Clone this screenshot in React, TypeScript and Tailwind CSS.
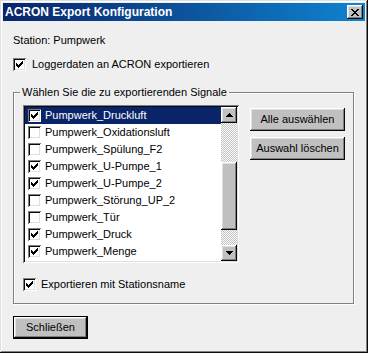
const signals = [
  { name: 'Pumpwerk_Druckluft', checked: true },
  { name: 'Pumpwerk_Oxidationsluft', checked: false },
  { name: 'Pumpwerk_Spülung_F2', checked: false },
  { name: 'Pumpwerk_U-Pumpe_1', checked: true },
  { name: 'Pumpwerk_U-Pumpe_2', checked: true },
  { name: 'Pumpwerk_Störung_UP_2', checked: false },
  { name: 'Pumpwerk_Tür', checked: false },
  { name: 'Pumpwerk_Druck', checked: true },
  { name: 'Pumpwerk_Menge', checked: true },
];

const raised =
  'bg-[#c0c0c0] shadow-[inset_-1px_-1px_#0a0a0a,inset_1px_1px_#ffffff,inset_-2px_-2px_#808080,inset_2px_2px_#dfdfdf]';
const dither =
  'bg-[repeating-conic-gradient(#c0c0c0_0_25%,#ffffff_0_50%)] bg-size-[2px_2px]';

function CheckMark() {
  const cols = [
    [0, 2],
    [1, 3],
    [2, 4],
    [3, 3],
    [4, 2],
    [5, 1],
    [6, 0],
  ];
  return (
    <svg width="7" height="7" viewBox="0 0 7 7" shapeRendering="crispEdges">
      {cols.map(([x, y]) => (
        <rect key={x} x={x} y={y} width="1" height="3" fill="#000" />
      ))}
    </svg>
  );
}

function Checkbox({ checked }: { checked: boolean }) {
  return (
    <span className="inline-flex h-[13px] w-[13px] shrink-0 items-center justify-center bg-white shadow-[inset_1px_1px_#808080,inset_-1px_-1px_#ffffff,inset_2px_2px_#0a0a0a,inset_-2px_-2px_#dfdfdf]">
      {checked && <CheckMark />}
    </span>
  );
}

function Arrow({ up }: { up?: boolean }) {
  const rows = [0, 1, 2, 3];
  return (
    <svg width="7" height="4" viewBox="0 0 7 4" shapeRendering="crispEdges">
      {rows.map((r) => {
        const y = up ? r : 3 - r;
        return <rect key={r} x={3 - r} y={y} width={1 + r * 2} height="1" fill="#000" />;
      })}
    </svg>
  );
}

function Button({ label, isDefault }: { label: string; isDefault?: boolean }) {
  return (
    <button
      className={`flex h-[23px] items-center justify-center text-[11px] text-black ${raised} ${
        isDefault ? 'w-[75px] border border-black' : 'w-[95px]'
      }`}
    >
      {label}
    </button>
  );
}

export default function App() {
  return (
    <div
      className="flex h-[353px] w-[368px] flex-col bg-[#efefef] p-[3px] text-[11px] leading-[13px] text-black shadow-[inset_-1px_-1px_#0a0a0a,inset_1px_1px_#dfdfdf,inset_-2px_-2px_#808080,inset_2px_2px_#ffffff]"
      style={{ fontFamily: '"Liberation Sans", Arial, sans-serif' }}
    >
      <div className="flex h-[18px] items-center justify-between bg-gradient-to-r from-[#0a246a] to-[#1084d0] pl-[2px] pr-[2px]">
        <span className="text-[12px] font-bold text-white">ACRON Export Konfiguration</span>
        <span className={`flex h-[14px] w-[16px] items-center justify-center ${raised}`}>
          <svg width="8" height="7" viewBox="0 0 8 7" shapeRendering="crispEdges">
            <path d="M0 0h2v1h-2zM6 0h2v1h-2zM1 1h2v1h-2zM5 1h2v1h-2zM2 2h4v1h-4zM3 3h2v1h-2zM2 4h4v1h-4zM1 5h2v1h-2zM5 5h2v1h-2zM0 6h2v1h-2zM6 6h2v1h-2z" fill="#000" />
          </svg>
        </span>
      </div>

      <div className="flex flex-col pl-[10px] pr-[11px]">
        <div className="mt-[13px]">Station: Pumpwerk</div>

        <label className="mt-[11px] flex items-center gap-[6px]">
          <Checkbox checked />
          <span>Loggerdaten an ACRON exportieren</span>
        </label>

        <fieldset className="mt-[15px] border border-[#808080] shadow-[inset_1px_1px_#ffffff,1px_1px_#ffffff]">
          <legend className="ml-[6px] bg-[#efefef] px-[2px]">
            Wählen Sie die zu exportierenden Signale
          </legend>
          <div className="pb-[12px] pl-[9px] pt-[6px]">
            <div className="flex">
              <div className="flex h-[158px] w-[216px] bg-white p-[2px] shadow-[inset_1px_1px_#808080,inset_-1px_-1px_#ffffff,inset_2px_2px_#0a0a0a,inset_-2px_-2px_#dfdfdf]">
                <div className="flex flex-1 flex-col">
                  {signals.map((s, i) => (
                    <div
                      key={s.name}
                      className={`flex h-[17px] items-center gap-[4px] pl-[3px] ${
                        i === 0 ? 'bg-[#0a246a] text-white' : ''
                      }`}
                    >
                      <Checkbox checked={s.checked} />
                      <span>{s.name}</span>
                    </div>
                  ))}
                </div>
                <div className="flex w-[16px] flex-col">
                  <div className={`flex h-[16px] items-center justify-center ${raised}`}>
                    <Arrow up />
                  </div>
                  <div className={`h-[39px] ${dither}`} />
                  <div className={`h-[68px] ${raised}`} />
                  <div className={`flex-1 ${dither}`} />
                  <div className={`flex h-[16px] items-center justify-center ${raised}`}>
                    <Arrow />
                  </div>
                </div>
              </div>

              <div className="ml-[11px] mt-[3px] flex flex-col gap-[6px]">
                <Button label="Alle auswählen" />
                <Button label="Auswahl löschen" />
              </div>
            </div>

            <label className="mt-[15px] flex items-center gap-[5px]">
              <Checkbox checked />
              <span>Exportieren mit Stationsname</span>
            </label>
          </div>
        </fieldset>

        <div className="mt-[12px]">
          <Button label="Schließen" isDefault />
        </div>
      </div>
    </div>
  );
}
